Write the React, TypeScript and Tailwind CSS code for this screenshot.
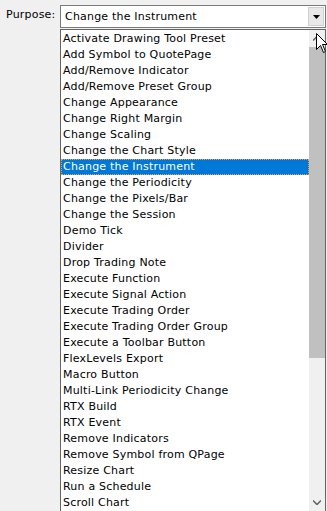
import React from "react";

const items = [
  "Activate Drawing Tool Preset",
  "Add Symbol to QuotePage",
  "Add/Remove Indicator",
  "Add/Remove Preset Group",
  "Change Appearance",
  "Change Right Margin",
  "Change Scaling",
  "Change the Chart Style",
  "Change the Instrument",
  "Change the Periodicity",
  "Change the Pixels/Bar",
  "Change the Session",
  "Demo Tick",
  "Divider",
  "Drop Trading Note",
  "Execute Function",
  "Execute Signal Action",
  "Execute Trading Order",
  "Execute Trading Order Group",
  "Execute a Toolbar Button",
  "FlexLevels Export",
  "Macro Button",
  "Multi-Link Periodicity Change",
  "RTX Build",
  "RTX Event",
  "Remove Indicators",
  "Remove Symbol from QPage",
  "Resize Chart",
  "Run a Schedule",
  "Scroll Chart",
];

const selected = "Change the Instrument";

export default function App() {
  return (
    <div className="relative w-[327px] h-[511px] overflow-hidden bg-[#f0f0f0] text-[11px] tracking-[0.2px] text-black font-['DejaVu_Sans',Tahoma,sans-serif]">
      {/* Purpose row */}
      <div className="flex items-start pt-[5px]">
        <span className="w-[60px] pl-[6px] pt-[2px] leading-[16px]">Purpose:</span>
        <div className="flex h-[23px] w-[266px] border border-[#7a7a7a] bg-white">
          <span className="flex-1 pl-[4px] pt-[3px] leading-[16px]">{selected}</span>
          <div className="m-[1px] flex w-[16px] items-center justify-center border border-[#d0d0d0] bg-[#e8e8e8]">
            <svg width="7" height="4" viewBox="0 0 7 4">
              <path d="M0 0h7L3.5 4z" fill="#000" />
            </svg>
          </div>
        </div>
      </div>

      {/* Dropdown list */}
      <div className="ml-[60px] mt-[1px] flex w-[266px] border border-[#646464] bg-white">
        <ul className="flex-1 pt-[1px]">
          {items.map((item) =>
            item === selected ? (
              <li
                key={item}
                className="h-[16px] border border-dotted border-[#f0a040] bg-[#0078d7] pl-[1px] leading-[14px] text-white"
              >
                {item}
              </li>
            ) : (
              <li key={item} className="h-[16px] pl-[2px] leading-[16px]">
                {item}
              </li>
            )
          )}
        </ul>
        <div className="flex w-[16px] flex-col bg-[#f0f0f0]">
          <div className="flex h-[17px] items-center justify-center">
            <svg width="8" height="5" viewBox="0 0 8 5">
              <path d="M0 4.5L4 0.5L8 4.5" stroke="#606060" strokeWidth="1.5" fill="none" />
            </svg>
          </div>
          <div className="h-[311px] bg-[#c0c0c0]" />
          <div className="flex-1" />
          <div className="flex h-[17px] items-center justify-center">
            <svg width="8" height="5" viewBox="0 0 8 5">
              <path d="M0 0.5L4 4.5L8 0.5" stroke="#606060" strokeWidth="1.5" fill="none" />
            </svg>
          </div>
        </div>
      </div>

      {/* Mouse pointer */}
      <svg
        className="absolute left-[316px] top-[33px]"
        width="12"
        height="21"
        viewBox="0 0 12 21"
      >
        <path
          d="M0.5 0.5V16.5L4.5 12.5L7.5 19.5L9.5 18.5L6.5 11.5H11.5Z"
          fill="#fff"
          stroke="#000"
          strokeWidth="1"
          strokeLinejoin="miter"
        />
      </svg>
    </div>
  );
}
